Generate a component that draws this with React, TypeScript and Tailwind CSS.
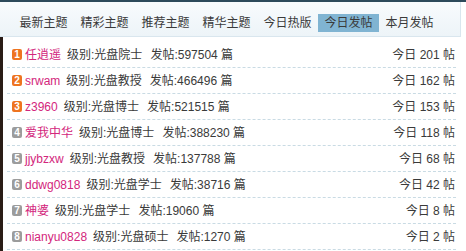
import React from "react";

interface RankItem {
  name: string;
  level: string;
  posts: number;
  today: number;
}

const tabs = ["最新主题", "精彩主题", "推荐主题", "精华主题", "今日热版", "今日发帖", "本月发帖"];

const ranks: RankItem[] = [
  { name: "任逍遥", level: "光盘院士", posts: 597504, today: 201 },
  { name: "srwam", level: "光盘教授", posts: 466496, today: 162 },
  { name: "z3960", level: "光盘博士", posts: 521515, today: 153 },
  { name: "爱我中华", level: "光盘博士", posts: 388230, today: 118 },
  { name: "jjybzxw", level: "光盘教授", posts: 137788, today: 68 },
  { name: "ddwg0818", level: "光盘学士", posts: 38716, today: 42 },
  { name: "神婆", level: "光盘学士", posts: 19060, today: 8 },
  { name: "nianyu0828", level: "光盘硕士", posts: 1270, today: 2 },
];

const App = () => {
  return (
    <div
      className="relative h-[251px] w-[466px] overflow-hidden bg-white text-[12px] text-[#3a3a3a]"
      style={{ fontFamily: '"Liberation Sans", "Noto Sans CJK SC", sans-serif' }}
    >
      <div className="h-[2px] bg-[#2d4a5b]" />

      {/* tab bar */}
      <div className="flex h-[35px] w-[461px] border-b border-r border-[#d9e6ee] bg-gradient-to-b from-[#f8fbfd] to-[#edf4f8] pl-[13px] pt-[12px]">
        {tabs.map((tab, i) => (
          <div
            key={tab}
            className={`h-[18px] w-[61px] text-center leading-[18px] ${
              i === 5 ? "bg-[#80b4d2]" : ""
            }`}
          >
            {tab}
          </div>
        ))}
      </div>

      <div className="flex h-[214px]">
        <div className="w-[3px] bg-[#2a1c16]" />
        <div className="w-[453px] pl-[4px] pt-[5px]">
          {ranks.map((r, i) => (
            <div
              key={r.name}
              className="flex h-[26px] items-center border-b border-dashed border-[#c9dbe4] pl-[5px] pr-[1px]"
            >
              <span
                className={`flex h-[11px] w-[10px] items-center justify-center rounded-[2px] text-[10px] font-bold leading-none text-white ${
                  i < 3 ? "bg-[#ee7420]" : "bg-[#9c9c9c]"
                }`}
              >
                {i + 1}
              </span>
              <span className="ml-[3px] text-[#d3267c]">{r.name}</span>
              <span className="ml-[6px]">级别:{r.level}</span>
              <span className="ml-[8px]">发帖:{r.posts} 篇</span>
              <span className="ml-auto">今日 {r.today} 帖</span>
            </div>
          ))}
        </div>
      </div>
    </div>
  );
};

export default App;
